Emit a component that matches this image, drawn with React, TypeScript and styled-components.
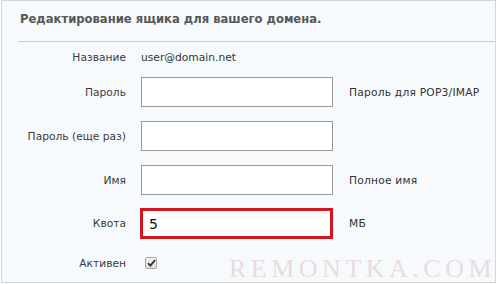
import React from "react";
import styled, { createGlobalStyle } from "styled-components";

const Global = createGlobalStyle`
  html, body { margin: 0; padding: 0; background: #ffffff; }
  body { font-family: "DejaVu Sans", Verdana, sans-serif; }
`;

const Frame = styled.div`
  position: relative;
  box-sizing: border-box;
  margin-left: 1px;
  width: 495px;
  height: 283px;
  border: 1px solid #d4d6d8;
  background: #f7fafc;
  overflow: hidden;
`;

const Header = styled.div`
  box-sizing: border-box;
  margin-left: 16px;
  height: 41px;
  border-bottom: 1px solid #c9cbcd;
  display: flex;
  align-items: center;
  padding-left: 2px;
  padding-bottom: 4px;
`;

const Title = styled.h1`
  margin: 0;
  font-family: "DejaVu Sans", Verdana, sans-serif;
  font-size: 11.6px;
  font-weight: bold;
  color: #555759;
`;

const Row = styled.div<{ $top: number; $h: number }>`
  display: grid;
  grid-template-columns: 124px 192px auto;
  column-gap: 15px;
  align-items: center;
  height: ${(p) => p.$h}px;
  margin-top: ${(p) => p.$top}px;
  font-size: 10.7px;
  color: #333;
`;

const Label = styled.div`
  text-align: right;
  color: #3a3a3a;
`;

const Value = styled.div`
  color: #333;
`;

const Hint = styled.div`
  color: #333;
  margin-left: 1px;
  letter-spacing: 0.2px;
`;

const Input = styled.div<{ $highlight?: boolean }>`
  box-sizing: border-box;
  height: ${(p) => (p.$highlight ? 31 : 30)}px;
  width: ${(p) => (p.$highlight ? 193 : 192)}px;
  margin-left: ${(p) => (p.$highlight ? -1 : 0)}px;
  border: ${(p) => (p.$highlight ? "3px solid #d2161c" : "1px solid #9a9a9a")};
  background: #ffffff;
  display: flex;
  align-items: center;
  padding-left: 6px;
  font-size: 14px;
  color: #111;
`;

const Check = styled.span`
  box-sizing: border-box;
  display: inline-flex;
  align-items: center;
  justify-content: center;
  width: 12px;
  height: 12px;
  margin-left: 4px;
  border: 1px solid #a8a8a8;
  border-radius: 2px;
  background: linear-gradient(#f4f4f4, #dedede);
`;

const Watermark = styled.div`
  position: absolute;
  left: 227px;
  top: 255px;
  font-family: "Liberation Serif", "Times New Roman", serif;
  font-size: 26px;
  line-height: 1;
  letter-spacing: 4.5px;
  color: #e9dcdc;
  white-space: nowrap;
`;

export default function App() {
  return (
    <>
      <Global />
      <Frame>
        <Header>
          <Title>Редактирование ящика для вашего домена.</Title>
        </Header>
        <Row $top={0} $h={30}>
          <Label>Название</Label>
          <Value>user@domain.net</Value>
          <span />
        </Row>
        <Row $top={5} $h={30}>
          <Label>Пароль</Label>
          <Input />
          <Hint>Пароль для POP3/IMAP</Hint>
        </Row>
        <Row $top={14} $h={30}>
          <Label>Пароль (еще раз)</Label>
          <Input />
          <span />
        </Row>
        <Row $top={14} $h={30}>
          <Label>Имя</Label>
          <Input />
          <Hint>Полное имя</Hint>
        </Row>
        <Row $top={13} $h={31}>
          <Label>Квота</Label>
          <Input $highlight>5</Input>
          <Hint>МБ</Hint>
        </Row>
        <Row $top={12} $h={24}>
          <Label>Активен</Label>
          <div>
            <Check>
              <svg width="9" height="8" viewBox="0 0 9 8">
                <path d="M1 4.2 L3.4 6.6 L8 1.2" fill="none" stroke="#333" strokeWidth="1.8" />
              </svg>
            </Check>
          </div>
          <span />
        </Row>
        <Watermark>REMONTKA.COM</Watermark>
      </Frame>
    </>
  );
}
